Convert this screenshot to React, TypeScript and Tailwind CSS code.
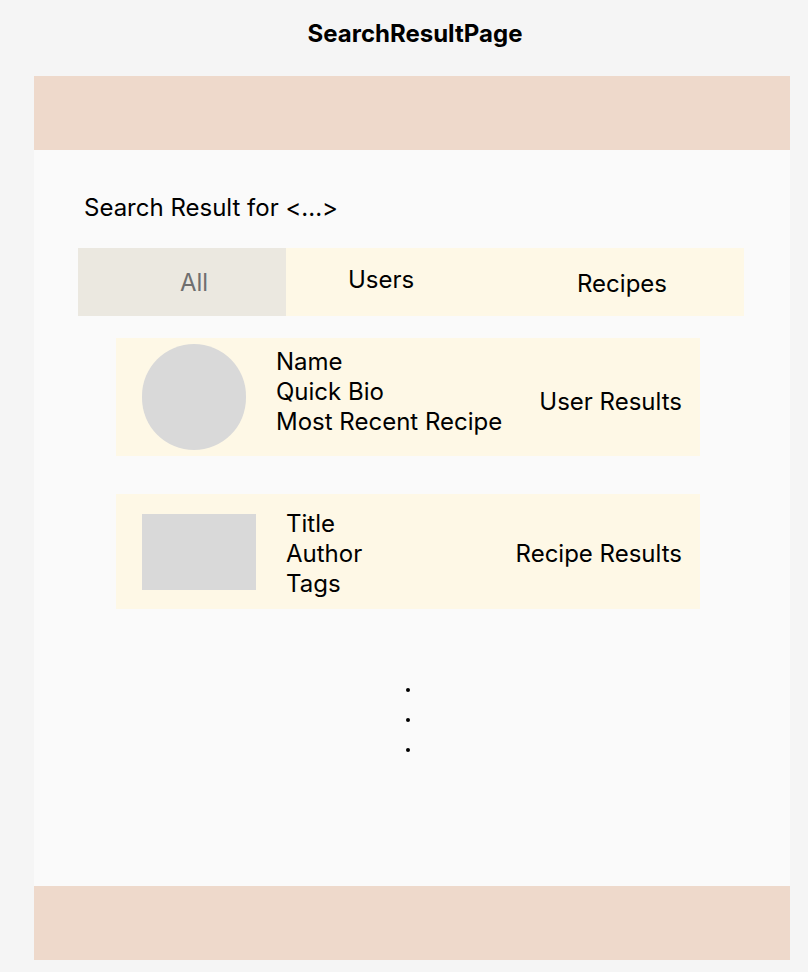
import React from "react";

export default function App() {
  return (
    <div
      className="w-[808px] h-[972px] bg-[#f5f5f5] text-black"
      style={{ fontFamily: "Inter, 'Noto Sans', sans-serif" }}
    >
      <div className="h-[76px] pl-[40px] w-[790px] flex items-start justify-center pt-[19px]">
        <h1 className="text-[24px] leading-[30px] font-bold">SearchResultPage</h1>
      </div>
      <div className="ml-[34px] w-[756px] h-[884px] flex flex-col bg-[#fafafa]">
        <div className="h-[74px] bg-[#eed9cb]" />
        <div className="flex-1 flex flex-col">
          <div className="pl-[50px] pt-[43px] text-[24px] leading-[30px]">Search Result for &lt;...&gt;</div>
          <div className="ml-[44px] mt-[25px] w-[666px] h-[68px] flex bg-[#fef8e6] text-[24px] leading-[30px]">
            <div className="w-[208px] bg-[#ebe8e0] flex items-center justify-center text-[#6f6f6f] pt-[1px] pl-[24px]">All</div>
            <div className="w-[190px] flex justify-center pt-[17px]">Users</div>
            <div className="flex-1 flex justify-center pt-[21px] pl-[24px]">Recipes</div>
          </div>
          <div className="ml-[82px] mt-[22px] w-[584px] h-[118px] bg-[#fef8e6] flex items-center pl-[26px] pr-[18px] text-[24px] leading-[30px]">
            <div className="w-[104px] h-[106px] rounded-full bg-[#d9d9d9]" />
            <div className="ml-[30px] flex flex-col mb-[10px]">
              <span>Name</span>
              <span>Quick Bio</span>
              <span>Most Recent Recipe</span>
            </div>
            <div className="ml-auto pt-[10px]">User Results</div>
          </div>
          <div className="ml-[82px] mt-[38px] w-[584px] h-[115px] bg-[#fef8e6] flex items-center pl-[26px] pr-[18px] text-[24px] leading-[30px]">
            <div className="w-[114px] h-[76px] bg-[#d9d9d9]" />
            <div className="ml-[30px] flex flex-col mt-[4px]">
              <span>Title</span>
              <span>Author</span>
              <span>Tags</span>
            </div>
            <div className="ml-auto mt-[4px]">Recipe Results</div>
          </div>
          <div className="mt-[79px] flex flex-col items-center gap-[26px] pr-[8px]">
            <div className="w-[4px] h-[4px] rounded-full bg-black" />
            <div className="w-[4px] h-[4px] rounded-full bg-black" />
            <div className="w-[4px] h-[4px] rounded-full bg-black" />
          </div>
        </div>
        <div className="h-[74px] bg-[#eed9cb]" />
      </div>
    </div>
  );
}
